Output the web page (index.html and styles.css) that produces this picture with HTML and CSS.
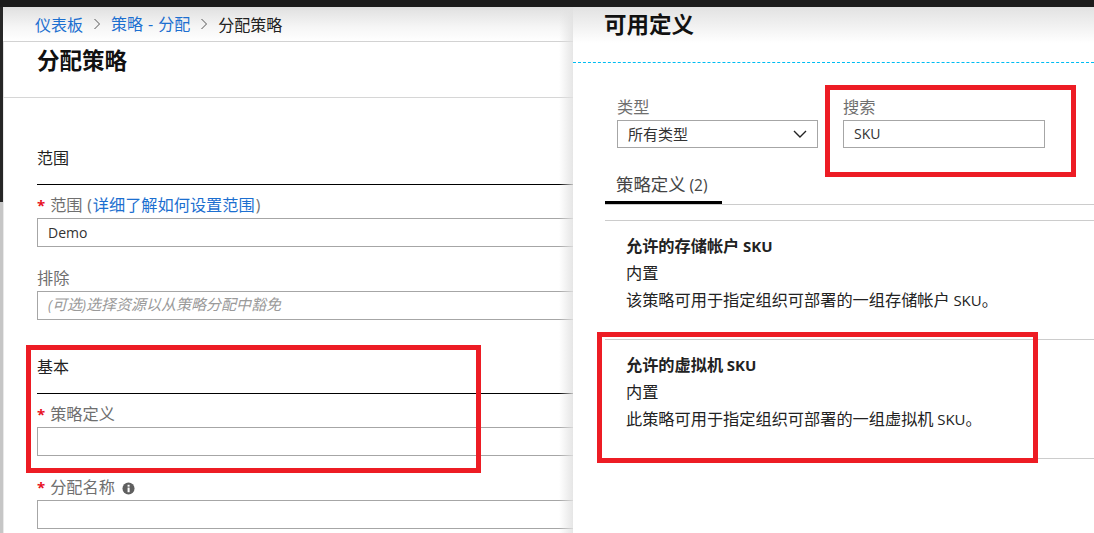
FILE: index.html
```html
<!DOCTYPE html>
<html lang="zh-CN">
<head>
<meta charset="utf-8">
<title>分配策略</title>
<link rel="stylesheet" href="styles.css">
</head>
<body>
<div class="app">
  <div class="topbar"></div>
  <div class="main">
    <div class="strip"><div class="strip-dark"></div><div class="strip-light"></div></div>
    <section class="left">
      <nav class="crumbs">
        <a class="link">仪表板</a>
        <svg class="chev" viewBox="0 0 8 12"><path d="M1.5 1 L6.5 6 L1.5 11" /></svg>
        <a class="link">策略<span class="dash">-</span>分配</a>
        <svg class="chev" viewBox="0 0 8 12"><path d="M1.5 1 L6.5 6 L1.5 11" /></svg>
        <span>分配策略</span>
      </nav>
      <header class="blade-head"><h1 class="title">分配策略</h1></header>
      <div class="form">
        <h2 class="section">范围</h2>
        <div class="field">
          <label class="label"><span class="star">*</span>范围 <span class="paren">(</span><a class="link">详细了解如何设置范围</a><span class="paren">)</span></label>
          <div class="input"><span class="lat">Demo</span></div>
        </div>
        <div class="field">
          <label class="label">排除</label>
          <div class="input placeholder"><span class="lat">(</span>可选<span class="lat">)</span>选择资源以从策略分配中豁免</div>
        </div>
        <h2 class="section section-next">基本</h2>
        <div class="field">
          <label class="label"><span class="star">*</span>策略定义</label>
          <div class="input"></div>
        </div>
        <div class="field">
          <label class="label"><span class="star">*</span>分配名称<svg class="info" viewBox="0 0 14 14"><circle cx="7" cy="7" r="6.5" fill="#5f5f5f"/><rect x="6" y="6" width="2.2" height="5" fill="#fff"/><rect x="6" y="3" width="2.2" height="2" fill="#fff"/></svg></label>
          <div class="input"></div>
        </div>
      </div>
      <div class="edge-shadow"></div>
    </section>
    <aside class="right">
      <header class="right-head"><h1 class="title">可用定义</h1></header>
      <div class="filters">
        <div class="filter">
          <label class="label">类型</label>
          <div class="input compact select"><span>所有类型</span>
            <svg class="down" viewBox="0 0 14 8"><path d="M1 1 L7 7 L13 1"/></svg>
          </div>
        </div>
        <div class="filter filter-search">
          <label class="label">搜索</label>
          <div class="input compact"><span class="lat">SKU</span></div>
        </div>
      </div>
      <div class="tabs"><div class="tab">策略定义 <span class="lat">(2)</span></div></div>
      <ul class="list">
        <li class="item">
          <div class="row strong">允许的存储帐户 <span class="lat">SKU</span></div>
          <div class="row">内置</div>
          <div class="row">该策略可用于指定组织可部署的一组存储帐户 <span class="lat">SKU</span>。</div>
        </li>
        <li class="item">
          <div class="row strong">允许的虚拟机 <span class="lat">SKU</span></div>
          <div class="row">内置</div>
          <div class="row">此策略可用于指定组织可部署的一组虚拟机 <span class="lat">SKU</span>。</div>
        </li>
      </ul>
    </aside>
  </div>
  <div class="mark mark-basic"></div>
  <div class="mark mark-search"></div>
  <div class="mark mark-item"></div>
</div>
</body>
</html>
```
FILE: styles.css
```css
* { box-sizing: border-box; }
html, body { margin: 0; height: 100%; overflow: hidden; background: #fff; }
body { font-family: "Noto Sans CJK SC", "Open Sans", sans-serif; font-size: 16px; color: #222; }
h1, h2, ul { margin: 0; padding: 0; font-weight: normal; list-style: none; }
.lat { font-family: "Open Sans", "Noto Sans CJK SC", sans-serif; font-size: 14px; }

.app { position: relative; width: 1094px; height: 533px; display: flex; flex-direction: column; overflow: hidden; }
.topbar { height: 7px; background: #1c1c1c; flex: none; }
.main { flex: 1; display: flex; min-height: 0; }

.strip { width: 3px; flex: none; display: flex; flex-direction: column; }
.strip-dark { height: 195px; background: #262626; }
.strip-light { flex: 1; background: #c6c6c6; }

.left { position: relative; width: 570px; flex: none; overflow: hidden; background: #fff; }
.crumbs { height: 35px; padding: 0 0 1px 32px; display: flex; align-items: center; gap: 10px; line-height: 34px; white-space: nowrap;
  background: linear-gradient(#e0e0e0, #f6f6f6 60%, #fff); border-bottom: 1px solid #d2d2d2; }
.link { color: #1c6fd0; }
.dash { margin: 0 5px; font-family: "Open Sans", sans-serif; font-size: 16px; }
.chev { width: 8px; height: 12px; fill: none; stroke: #555; stroke-width: 1; }
.blade-head { height: 56px; padding: 2px 0 0 33px; border-bottom: 1px solid #d6d6d6; border-left: 1px solid #e2e2e2; }
.title { font-size: 22.5px; font-weight: 700; line-height: 30px; color: #111; }

.form { padding: 48px 0 0 33px; border-left: 1px solid #e9e9e9; }
.section { font-size: 16px; line-height: 22px; height: 39px; padding-bottom: 16px; border-bottom: 1px solid #000; color: #222; margin-bottom: 8px; white-space: nowrap; }
.section-next { margin-top: 16px; }
.field { height: 73px; width: 570px; }
.label { display: block; height: 25px; line-height: 23px; color: #6f6f6f; white-space: nowrap; font-size: 16.2px; }
.paren { font-family: "Open Sans", sans-serif; font-size: 15.5px; margin: 0 1px; }
.star { color: #e81123; font-family: "Open Sans", sans-serif; font-size: 15px; font-weight: 700; margin-right: 5px; line-height: 1; }
.input { height: 29px; border: 1px solid #a6a6a6; background: #fff; padding: 0 10px; line-height: 24px; color: #333; white-space: nowrap; overflow: hidden; }
.compact { height: 28px; line-height: 23px; }
.placeholder { font-style: italic; color: #9a9a9a; font-size: 15px; }
.info { width: 13px; height: 13px; vertical-align: -2px; margin-left: 7px; }
.edge-shadow { position: absolute; top: 0; right: 0; bottom: 0; width: 14px; background: linear-gradient(to right, rgba(225,225,225,0), rgba(225,225,225,.85)); }

.right { flex: 1; min-width: 0; padding-left: 32px; overflow: hidden; background: #fff; position: relative; }
.right::before { content: ""; position: absolute; left: 0; right: 0; top: 0; height: 36px; background: linear-gradient(#e2e2e2, #fff); }
.right-head { position: relative; height: 56px; margin-left: -32px; padding: 1px 0 0 31px; border-bottom: 1px dashed #00bcf2; }
.filters { display: flex; gap: 25px; padding: 32px 0 0 12px; }
.filter { width: 201px; flex: none; }
.filter-search { width: 202px; }
.select { display: flex; align-items: center; justify-content: space-between; font-size: 15px; }
.select span { position: relative; top: -1px; }
.down { width: 14px; height: 8px; fill: none; stroke: #222; stroke-width: 1.4; }

.tabs { margin-top: 25px; height: 32px; border-bottom: 1px solid #ccc; }
.tab { width: 117px; height: 32px; padding-left: 11px; font-size: 17.4px; line-height: 24px; border-bottom: 3px solid #000; color: #444; white-space: nowrap; position: relative; top: -1px; }
.tab .lat { font-size: 15.5px; }
.list { margin-top: 15px; border-top: 1px solid #ccc; }
.item { height: 119px; padding: 11px 0 0 21px; border-bottom: 1px solid #ccc; font-size: 16.2px; }
.row { height: 27px; line-height: 27px; color: #222; white-space: nowrap; }
.row .lat { font-size: 15px; }
.strong { font-weight: 700; }
.strong .lat { font-weight: 700; }

.mark { position: absolute; border: 5px solid #ed1c24; pointer-events: none; }
.mark-basic { left: 26px; top: 345px; width: 455px; height: 128px; }
.mark-search { left: 825px; top: 85px; width: 251px; height: 92px; }
.mark-item { left: 597px; top: 332px; width: 441px; height: 131px; }
```
